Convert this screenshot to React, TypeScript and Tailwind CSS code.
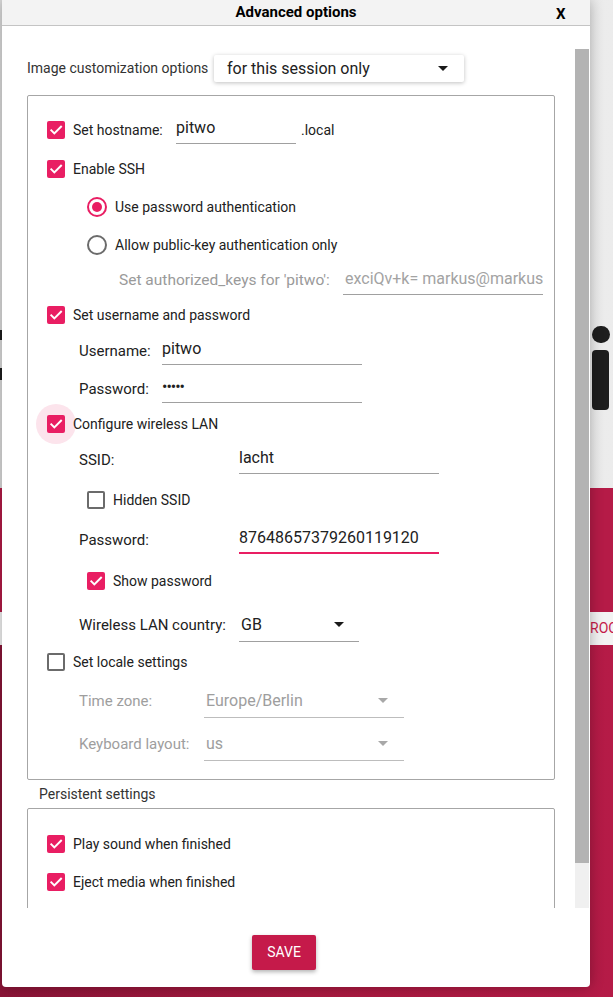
import React from "react"

const font = { fontFamily: "Roboto, 'Liberation Sans', sans-serif" }

function Check({ on }: { on: boolean }) {
  if (!on) {
    return <span className="block h-[18px] w-[18px] shrink-0 rounded-[2px] border-2 border-[#6b6b6b] bg-white" />
  }
  return (
    <span className="flex h-[18px] w-[18px] shrink-0 items-center justify-center rounded-[2px] bg-[#e91e63]">
      <svg viewBox="0 0 24 24" className="h-[16px] w-[16px]">
        <path d="M5 12.5l4.5 4.5L19.5 7" fill="none" stroke="white" strokeWidth="3" strokeLinecap="square" />
      </svg>
    </span>
  )
}

function Radio({ on }: { on: boolean }) {
  return (
    <span
      className={
        on
          ? "flex h-[20px] w-[20px] shrink-0 items-center justify-center rounded-full border-2 border-[#e91e63]"
          : "flex h-[20px] w-[20px] shrink-0 items-center justify-center rounded-full border-2 border-[#6b6b6b]"
      }
    >
      {on && <span className="h-[10px] w-[10px] rounded-full bg-[#e91e63]" />}
    </span>
  )
}

function Caret({ gray }: { gray?: boolean }) {
  return (
    <svg viewBox="0 0 10 5" className="h-[5px] w-[10px]">
      <path d="M0 0h10L5 5z" fill={gray ? "#a8a8a8" : "#1a1a1a"} />
    </svg>
  )
}

export default function App() {
  return (
    <div className="relative h-[997px] w-[613px] overflow-hidden" style={font}>
      {/* background app behind the dialog */}
      <div className="flex h-full flex-col">
        <div className="h-[488px] bg-gradient-to-r from-[#dcdcdc] to-[#ececec]" />
        <div className="h-[124px] bg-[#b51b47]" />
        <div className="flex h-[33px] items-center overflow-hidden bg-[#f3f3f3] pl-[590px] text-[14px] whitespace-nowrap text-[#c51a4a]">
          ROO
        </div>
        <div className="flex-1 bg-gradient-to-r from-[#8a1437] via-[#a8193f] to-[#b51b47]" />
      </div>
      <div className="absolute top-[326px] left-[592px] h-[17px] w-[18px] rounded-full bg-[#1e1e1e]" />
      <div className="absolute top-[350px] left-[592px] h-[60px] w-[17px] rounded-[4px] bg-[#1e1e1e]" />
      <div className="absolute top-[330px] left-0 h-[10px] w-[2px] bg-[#1e1e1e]" />
      <div className="absolute top-[368px] left-0 h-[12px] w-[2px] bg-[#1e1e1e]" />

      {/* dialog */}
      <div className="absolute top-0 left-[2px] flex h-[987px] w-[588px] flex-col overflow-hidden rounded-b-[4px] bg-white shadow-[0_0_14px_rgba(0,0,0,0.3)]">
        <div className="relative flex h-[26px] shrink-0 items-center justify-center border-b border-[#c4c4c4] bg-[#f3f3f3]">
          <span className="text-[15px] font-bold text-black">Advanced options</span>
          <span className="absolute top-[3px] left-[554px] text-[15px] font-bold text-black">X</span>
        </div>

        <div className="flex h-[882px] shrink-0">
          <div className="w-[573px] overflow-hidden pl-[25px]">
            <div className="mt-[29px] flex h-[27px] items-center">
              <span className="w-[187px] text-[14px] text-[#333]">Image customization options</span>
              <div className="flex h-[27px] w-[250px] items-center justify-between rounded-[2px] bg-white pr-[16px] pl-[13px] shadow-[0_1px_4px_rgba(0,0,0,0.25)]">
                <span className="text-[16px] text-[#212121]">for this session only</span>
                <Caret />
              </div>
            </div>

            <div className="mt-[13px] w-[528px] rounded-[2px] border border-[#a6a6a6] pt-[14px] pb-[17px] pl-[19px] text-[14px] text-[#212121]">
              <div className="flex h-[40px] items-center">
                <Check on />
                <span className="ml-[8px] w-[103px]">Set hostname:</span>
                <div className="flex h-[27px] w-[120px] items-center border-b border-[#a0a0a0] pb-[4px] text-[16px]">pitwo</div>
                <span className="ml-[5px] text-[14px]">.local</span>
              </div>
              <div className="flex h-[38px] items-center">
                <Check on />
                <span className="ml-[8px]">Enable SSH</span>
              </div>
              <div className="flex h-[38px] items-center pl-[40px]">
                <Radio on />
                <span className="ml-[8px]">Use password authentication</span>
              </div>
              <div className="flex h-[38px] items-center pl-[40px]">
                <Radio on={false} />
                <span className="ml-[8px]">Allow public-key authentication only</span>
              </div>
              <div className="flex h-[34px] items-center pl-[72px]">
                <span className="w-[224px] text-[15.5px] text-[#9a9a9a]">Set authorized_keys for 'pitwo':</span>
                <div className="flex h-[27px] w-[200px] items-center overflow-hidden border-b border-[#a0a0a0] pb-[4px] pl-[2px] text-[16px] whitespace-nowrap text-[#a3a3a3]">
                  exciQv+k= markus@markus
                </div>
              </div>
              <div className="flex h-[34px] items-center">
                <Check on />
                <span className="ml-[8px]">Set username and password</span>
              </div>
              <div className="flex h-[38px] items-center pl-[32px]">
                <span className="w-[83px] text-[15px]">Username:</span>
                <div className="flex h-[27px] w-[200px] items-center border-b border-[#a0a0a0] pb-[4px] text-[16px]">pitwo</div>
              </div>
              <div className="flex h-[38px] items-center pl-[32px]">
                <span className="w-[83px] text-[15px]">Password:</span>
                <div className="flex h-[27px] w-[200px] items-center border-b border-[#a0a0a0] pb-[4px] text-[16px] tracking-[-1px]">
                  •••••
                </div>
              </div>
              <div className="flex h-[32px] items-center">
                <span className="relative flex items-center justify-center">
                  <span className="absolute h-[40px] w-[40px] rounded-full bg-[#fce4ec]" />
                  <span className="relative">
                    <Check on />
                  </span>
                </span>
                <span className="relative ml-[8px]">Configure wireless LAN</span>
              </div>
              <div className="flex h-[40px] items-center pl-[32px]">
                <span className="w-[160px] text-[15px]">SSID:</span>
                <div className="flex h-[27px] w-[200px] items-center border-b border-[#a0a0a0] pb-[4px] text-[16px]">lacht</div>
              </div>
              <div className="flex h-[40px] items-center pl-[40px]">
                <Check on={false} />
                <span className="ml-[8px]">Hidden SSID</span>
              </div>
              <div className="flex h-[40px] items-center pl-[32px]">
                <span className="w-[160px] text-[15px]">Password:</span>
                <div className="flex h-[27px] w-[200px] items-center border-b-2 border-[#e91e63] pt-[1px] pb-[3px] text-[16px]">
                  87648657379260119120
                </div>
              </div>
              <div className="flex h-[42px] items-center pl-[40px]">
                <Check on />
                <span className="ml-[8px]">Show password</span>
              </div>
              <div className="flex h-[46px] items-center pl-[32px]">
                <span className="w-[160px] text-[15px]">Wireless LAN country:</span>
                <div className="flex h-[34px] w-[120px] items-center justify-between border-b border-[#a0a0a0] pr-[15px] pl-[2px] text-[16px]">
                  <span>GB</span>
                  <Caret />
                </div>
              </div>
              <div className="flex h-[28px] items-center">
                <Check on={false} />
                <span className="ml-[8px]">Set locale settings</span>
              </div>
              <div className="flex h-[50px] items-center pl-[32px] text-[#9e9e9e]">
                <span className="w-[125px] text-[15px]">Time zone:</span>
                <div className="flex h-[34px] w-[200px] items-center justify-between border-b border-[#bdbdbd] pr-[16px] pl-[2px] text-[16px]">
                  <span>Europe/Berlin</span>
                  <Caret gray />
                </div>
              </div>
              <div className="flex h-[36px] items-center pl-[32px] text-[#9e9e9e]">
                <span className="w-[125px] text-[15px]">Keyboard layout:</span>
                <div className="flex h-[34px] w-[200px] items-center justify-between border-b border-[#bdbdbd] pr-[16px] pl-[2px] text-[16px]">
                  <span>us</span>
                  <Caret gray />
                </div>
              </div>
            </div>

            <div className="flex h-[28px] items-center pl-[12px] text-[14px] text-[#333]">Persistent settings</div>
            <div className="h-[120px] w-[528px] rounded-[2px] border border-[#a6a6a6] pt-[17px] pl-[19px] text-[14px] text-[#212121]">
              <div className="flex h-[36px] items-center">
                <Check on />
                <span className="ml-[8px]">Play sound when finished</span>
              </div>
              <div className="flex h-[40px] items-center">
                <Check on />
                <span className="ml-[8px]">Eject media when finished</span>
              </div>
            </div>
          </div>
          <div className="mt-[23px] flex w-[14px] flex-col bg-[#f0f0f0]">
            <div className="h-[814px] bg-[#b3b3b3]" />
          </div>
        </div>

        <div className="flex flex-1 items-start pt-[27px] pl-[250px]">
          <button className="h-[35px] w-[64px] rounded-[2px] bg-[#c51a4a] text-[14px] text-white uppercase shadow-[0_2px_4px_rgba(0,0,0,0.3)]">
            Save
          </button>
        </div>
      </div>
    </div>
  )
}
